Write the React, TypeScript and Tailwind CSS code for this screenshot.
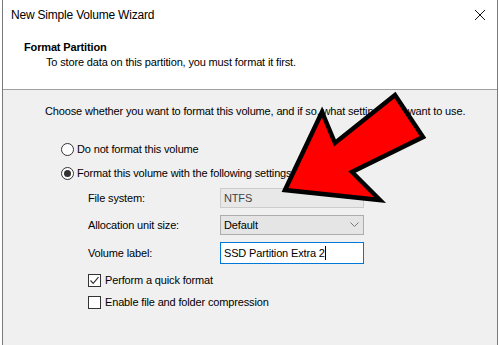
import React from "react";

function Radio({ checked }: { checked?: boolean }) {
  return (
    <span className="w-[13px] h-[13px] rounded-full border border-[#333] bg-white flex items-center justify-center shrink-0">
      {checked && <span className="w-[7px] h-[7px] rounded-full bg-[#333]" />}
    </span>
  );
}

function Check({ checked }: { checked?: boolean }) {
  return (
    <span className="w-[13px] h-[13px] border border-[#333] bg-white flex items-center justify-center shrink-0">
      {checked && (
        <svg width="11" height="11" viewBox="0 0 11 11">
          <path d="M1.5 5.5 L4.2 8.3 L9.5 2.2" fill="none" stroke="#333" strokeWidth="1.2" />
        </svg>
      )}
    </span>
  );
}

export default function App() {
  return (
    <div
      className="w-[499px] h-[345px] bg-white relative overflow-hidden text-[11px] tracking-[-0.15px] text-black"
      style={{ fontFamily: '"Liberation Sans", Arial, sans-serif' }}
    >
      <div className="ml-[2px] mr-[1px] h-full border-l border-r border-[#7a7a7a] flex flex-col">
        <div className="h-[90px] bg-white border-b border-[#a0a0a0] flex flex-col shrink-0">
          <div className="h-[30px] flex items-center pl-[8px] pr-[10px] justify-between">
            <span className="leading-[15px] text-[12px] tracking-[-0.2px]">New Simple Volume Wizard</span>
            <svg width="12" height="12" viewBox="0 0 12 12" className="mr-[1px]">
              <path d="M1 1 L11 11 M11 1 L1 11" stroke="#111" strokeWidth="1" />
            </svg>
          </div>
          <div className="pt-[10px] pl-[21px] font-bold leading-[15px]">Format Partition</div>
          <div className="pl-[43px] leading-[15px]">To store data on this partition, you must format it first.</div>
        </div>
        <div className="flex-1 bg-[#f0f0f0] flex flex-col pl-[42px]">
          <div className="mt-[14px] leading-[15px] whitespace-nowrap">
            Choose whether you want to format this volume, and if so, what settings you want to use.
          </div>
          <div className="mt-[22px] ml-[16px] h-[16px] flex items-center gap-[3px]">
            <Radio />
            <span>Do not format this volume</span>
          </div>
          <div className="mt-[8px] ml-[16px] h-[16px] flex items-center gap-[3px]">
            <Radio checked />
            <span>Format this volume with the following settings:</span>
          </div>
          <div className="ml-[43px] mt-[7px] h-[20px] flex items-center">
            <span className="w-[132px]">File system:</span>
            <div className="w-[144px] h-[20px] bg-[#e8e8e8] border border-[#cccccc] flex items-center pl-[3px] text-[#444]">NTFS</div>
          </div>
          <div className="ml-[43px] mt-[7px] h-[20px] flex items-center">
            <span className="w-[132px]">Allocation unit size:</span>
            <div className="w-[144px] h-[20px] bg-[#e5e5e5] border border-[#adadad] flex items-center justify-between pl-[3px] pr-[4px]">
              <span>Default</span>
              <svg width="9" height="6" viewBox="0 0 9 6">
                <path d="M0.5 0.5 L4.5 4.5 L8.5 0.5" fill="none" stroke="#777" strokeWidth="1" />
              </svg>
            </div>
          </div>
          <div className="ml-[43px] mt-[7px] h-[22px] flex items-center">
            <span className="w-[132px]">Volume label:</span>
            <div className="w-[144px] h-[22px] bg-white border border-[#0078d7] flex items-center pl-[3px]">
              <span>SSD Partition Extra 2</span>
              <span className="w-[1px] h-[14px] bg-black" />
            </div>
          </div>
          <div className="ml-[43px] mt-[9px] h-[14px] flex items-center gap-[4px]">
            <Check checked />
            <span>Perform a quick format</span>
          </div>
          <div className="ml-[43px] mt-[8px] h-[14px] flex items-center gap-[4px]">
            <Check />
            <span>Enable file and folder compression</span>
          </div>
        </div>
      </div>
      <svg
        className="absolute left-0 top-0 pointer-events-none"
        width="499"
        height="345"
        viewBox="0 0 499 345"
      >
        <polygon
          points="285,190 322,112 335,143 395,95 423,137 352,172 380,200"
          fill="#ff0000"
          stroke="#000"
          strokeWidth="4.5"
          strokeLinejoin="miter"
        />
      </svg>
    </div>
  );
}
